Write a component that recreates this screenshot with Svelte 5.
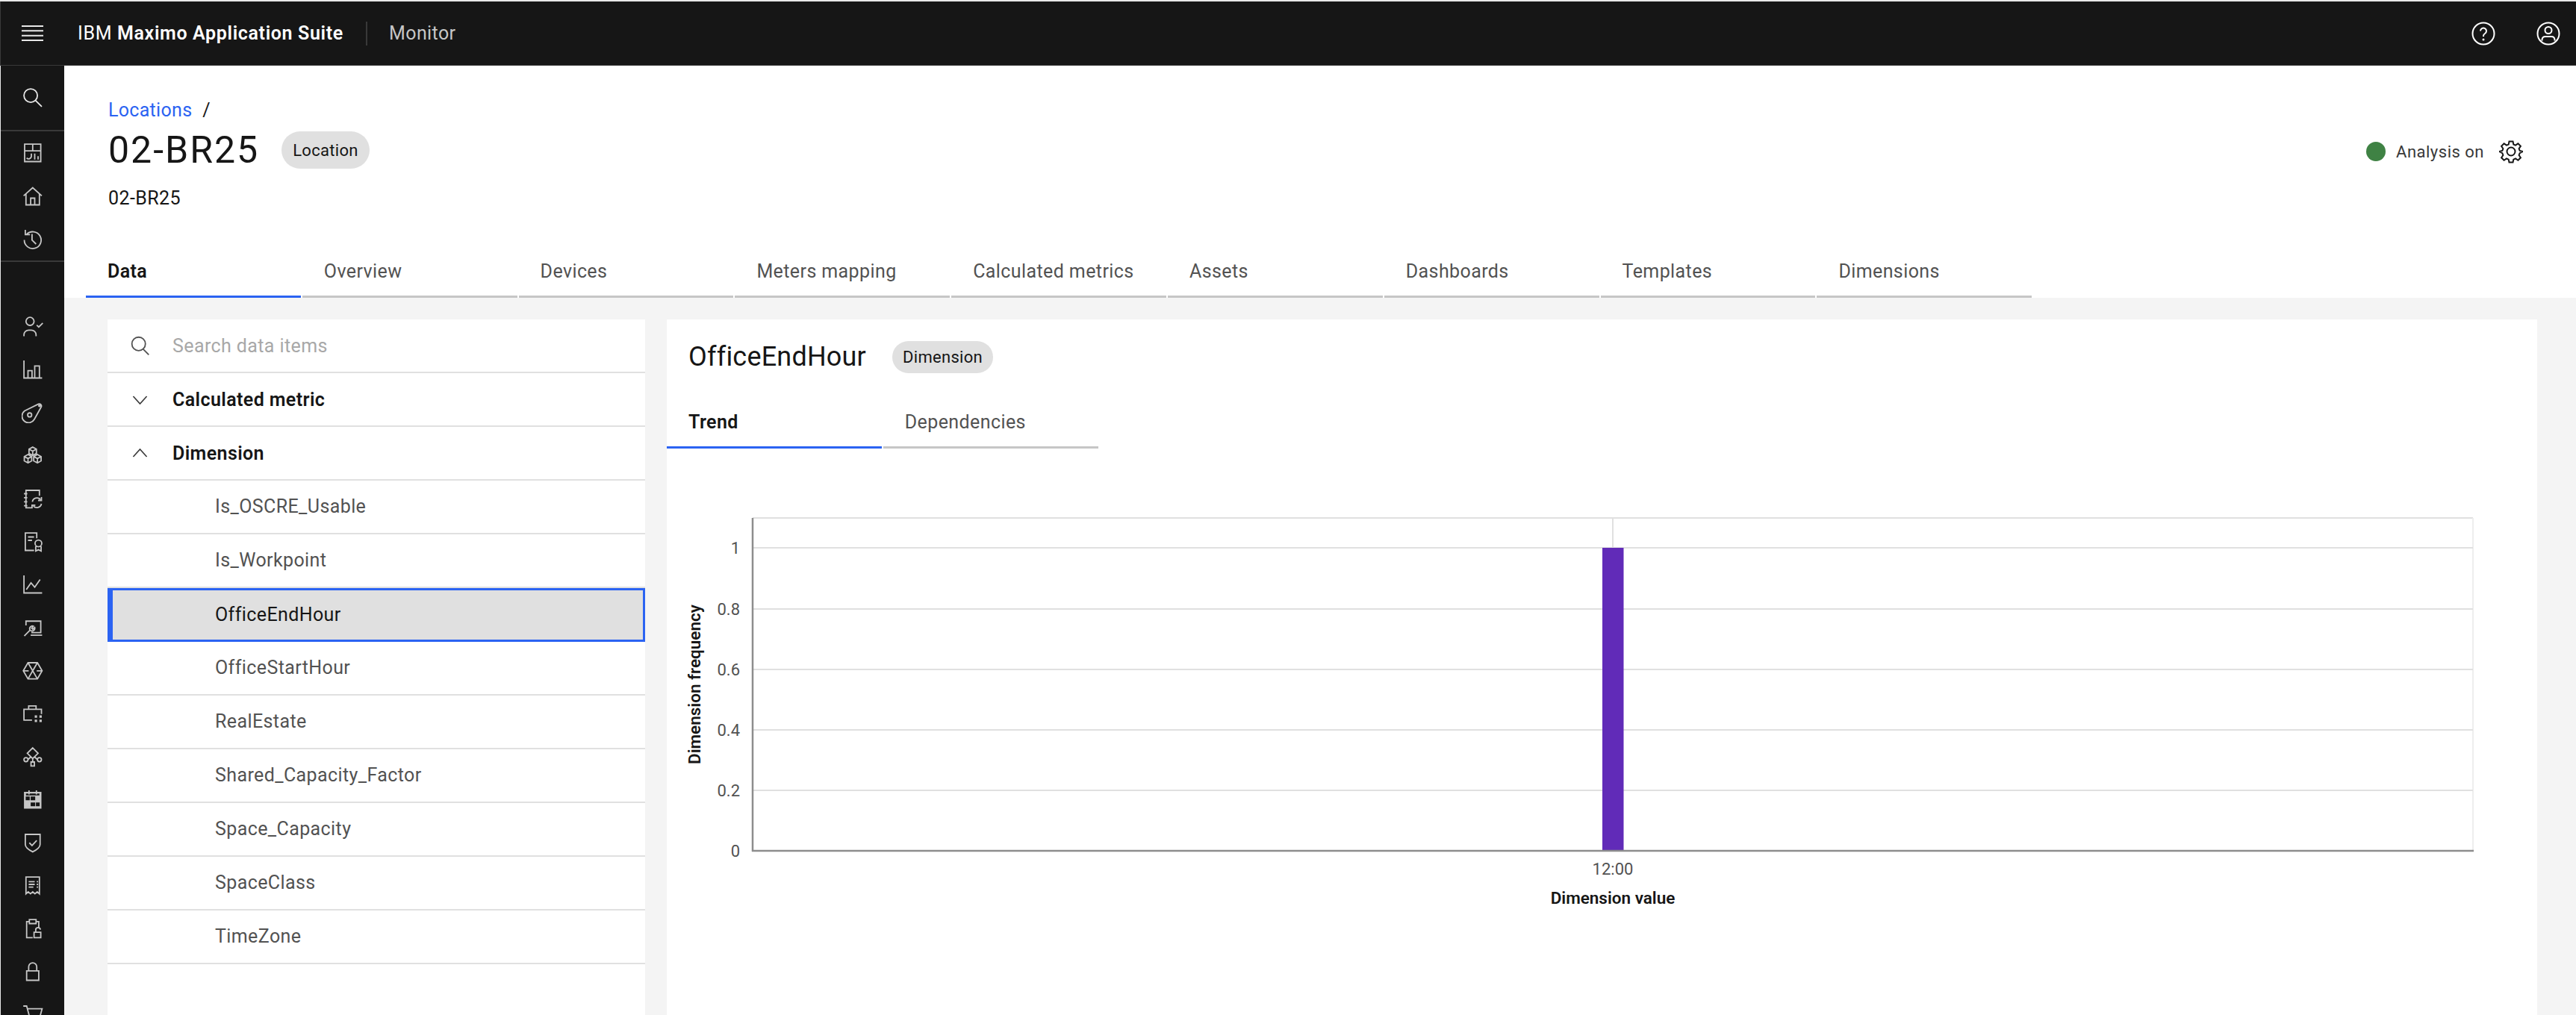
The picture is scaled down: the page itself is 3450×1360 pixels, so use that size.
<script>
  const circle = (cx, cy, r) => `M${cx - r} ${cy}a${r} ${r} 0 1 0 ${2 * r} 0a${r} ${r} 0 1 0 ${-2 * r} 0z`;
  const cube = (cx, cy) => `M${cx} ${cy - 6}l5.5 3v6.5l-5.5 3-5.5-3V${cy - 3}z M${cx - 5.5} ${cy - 3}l5.5 3 5.5-3 M${cx} ${cy}v6.5`;

  const topIcons = [
    { d: 'M4 3h24v26H4z M4 13h24 M16 3v10 M14 17v4a4 4 0 0 1-7 2.5 M19 17v9 M24 21v5' },
    { d: 'M2.5 15.5 16 3.5l13.5 12 M6 13v16h20V13 M13 29V19h6v10' },
    { d: 'M7 9.5A12.5 12.5 0 1 1 3.5 18 M5 3v7h7 M15 9v9l6 6' },
  ];
  const navIcons = [
    { d: `${circle(12, 8, 6)} M3 30v-2a7 7 0 0 1 7-7h4a7 7 0 0 1 7 7v2 M22 13.5l3 3 6-6` },
    { d: 'M3 3v26h27 M9 29V18h6v11 M19 29V11h7v18' },
    { d: `M4 13.5 24.5 3.3a3.2 3.2 0 0 1 4 4.6L18.5 26A9.8 9.8 0 1 1 4 13.5z ${circle(11.5, 19.5, 3)} ${circle(26, 6, 1)}` },
    { d: `${cube(16, 9)} ${cube(9, 20)} ${cube(23, 20)}` },
    { d: 'M26 12V4H6v26h8 M3 9h5 M3 15h5 M3 21h5 M3 27h5 M15.5 21a7 7 0 0 1 12-3.5 M29 14v5h-5 M29 24a7 7 0 0 1-12 3.5 M15 31v-5h5' },
    { d: `M22 11V3H5v26h13 M9 9h9 M9 14h6 ${circle(24.5, 18.5, 5)} M20.5 23v7l4-2 4 2v-7` },
    { d: 'M3 3v26h27 M6.5 24l7-10 5.5 6.5 8-11.5' },
    { d: 'M6 13V6.5h22v17H14 M13 27.5h17 M3.5 28.5l8.5-8.5 M12 20c-2-4 2-7.5 5-6l-2.5 3 1.5 1.5 3-2.5c1 3.500-3 7-7 4z' },
    { d: 'M9 4h14l7 12-7 12H9L2 16z M9 4l14 24 M23 4L9 28 M2 16h8 M22 16h8' },
    { d: 'M15 26H3V10h26v7 M10 10V5h11v5', fill: 'M19 19h3.500v3.500H19z M26 19h3.500v3.500H26z M19 25.500h3.500V29H19z M26 25.500h3.500V29H26z' },
    { d: `M16 3l8 8-8 8-8-8z ${circle(6, 20.500, 3)} ${circle(26, 20.500, 3)} M13.500 24h5v6h-5z M16 19v5 M9 20.500l4-4 M23 20.500l-4-4` },
    { d: 'M4 6h24v23H4z M10.500 3v6 M21.500 3v6', fill: 'M4 6h24v23H4z', dark: 'M6 7.500h20v3H6z M5.600 12h6v5.500h-6z M13 12h6.700v5.500H13z M13 21h6.700v5.500H13z M20.800 21h5.600v5.500h-5.600z' },
    { d: 'M5 4h22v15c0 4-5 8-11 11-6-3-11-7-11-11z M11 16.500l4 4 7-7.500' },
    { d: 'M6 3h20v25l-3.300-3-3.400 3-3.300-3-3.300 3-3.400-3L6 28z M10 10h9 M10 14h9 M10 18h7 M22 10h2 M22 14h2 M22 18h2' },
    { d: 'M11 6H7v24h9 M21 6h4v9 M11 3h10v6H11z M18 22h10v8H18z M20.500 22v-3a3.500 3.500 0 0 1 7-1' },
    { d: 'M7 15h18v14H7z M10 15V9a6 6 0 0 1 12 0v6' },
    { d: 'M2 4h5l4 15h16l3-11H8' },
  ];

  const tabs = ['Data', 'Overview', 'Devices', 'Meters mapping', 'Calculated metrics', 'Assets', 'Dashboards', 'Templates', 'Dimensions'];
  const items = ['Is_OSCRE_Usable', 'Is_Workpoint', 'OfficeEndHour', 'OfficeStartHour', 'RealEstate', 'Shared_Capacity_Factor', 'Space_Capacity', 'SpaceClass', 'TimeZone'];
  const ticks = [['1', 733], ['0.8', 815], ['0.6', 896], ['0.4', 977], ['0.2', 1058], ['0', 1139]];
  // chart svg starts at page y=640, panel x=893
  const oy = 640, ox = 893;
</script>

<div class="page">
  <header class="top">
    <svg class="burger" viewBox="0 0 29 21"><path d="M0 1h29M0 7.300h29M0 13.700h29M0 20h29" /></svg>
    <span class="brand">IBM <b>Maximo Application Suite</b></span>
    <span class="app">Monitor</span>
    <span class="top-sp"></span>
    <button class="round" aria-label="Help">
      <svg viewBox="0 0 32 32"><circle cx="16" cy="16" r="14.500" /><path d="M12 12.500a4 4 0 1 1 6 3.500c-1.300.800-2 1.500-2 3v1" /><circle class="dot" cx="16" cy="24" r="1.500" /></svg>
    </button>
    <button class="round" aria-label="User">
      <svg viewBox="0 0 32 32"><circle cx="16" cy="16" r="14.500" /><circle cx="16" cy="11.500" r="4.500" /><path d="M7.500 25.500V24a4.500 4.500 0 0 1 4.500-4h8a4.500 4.500 0 0 1 4.500 4v1.500" /></svg>
    </button>
  </header>

  <div class="shell">
    <nav class="side">
      <div class="side-group first">
        <svg class="ico bright" viewBox="0 0 32 32"><path d="M3 13a10 10 0 1 0 20 0a10 10 0 1 0-20 0z M20.500 20.500 29.500 29.500" /></svg>
      </div>
      <div class="side-group">
        {#each topIcons as ic}
          <svg class="ico" viewBox="0 0 32 32"><path d={ic.d} /></svg>
        {/each}
      </div>
      <div class="side-group last">
        {#each navIcons as ic}
          <svg class="ico" viewBox="0 0 32 32">
            {#if ic.fill}<path class="solid" d={ic.fill} />{/if}
            {#if ic.dark}<path class="hole" d={ic.dark} />{/if}
            <path d={ic.d} />
          </svg>
        {/each}
      </div>
    </nav>

    <main class="main">
      <section class="head">
        <div class="head-row">
          <div>
            <div class="crumb"><a href="#loc">Locations</a><span>/</span></div>
            <div class="title-row"><h1>02-BR25</h1><span class="chip">Location</span></div>
            <div class="sub">02-BR25</div>
          </div>
          <div class="status">
            <span class="status-dot"></span>
            <span class="status-t">Analysis on</span>
            <svg class="gear" viewBox="0 0 32 32"><path d="M13.500 2.500h5l.8 4 2.700 1.100 3.400-2.300 3.500 3.500-2.300 3.400L27.700 15l3.800.8v.4l-3.800 2-1.100 2.700 2.300 3.400-3.500 3.500-3.400-2.300-2.700 1.100-.800 3.900h-5l-.8-3.900-2.700-1.100-3.400 2.300-3.500-3.500 2.300-3.400-1.100-2.700-3.800-2v-.4l3.800-.8 1.100-2.700-2.300-3.400 3.500-3.500 3.400 2.300 2.700-1.100z" /><circle cx="16" cy="16" r="5.500" /></svg>
          </div>
        </div>
        <div class="tabs">
          {#each tabs as t, i}
            <div class="tab" class:on={i === 0}>{t}</div>
          {/each}
        </div>
      </section>

      <section class="body">
        <aside class="list">
          <div class="row search">
            <svg class="ri" viewBox="0 0 32 32"><path d="M4 13a10 10 0 1 0 20 0a10 10 0 1 0-20 0z M20.500 20.500 29 29" /></svg>
            <span>Search data items</span>
          </div>
          <div class="row group">
            <svg class="rc" viewBox="0 0 32 32"><path d="M6 11l10 11 10-11" /></svg>
            <span>Calculated metric</span>
          </div>
          <div class="row group">
            <svg class="rc" viewBox="0 0 32 32"><path d="M6 21l10-11 10 11" /></svg>
            <span>Dimension</span>
          </div>
          {#each items as it}
            <div class="row item" class:sel={it === 'OfficeEndHour'}>{it}</div>
          {/each}
        </aside>

        <article class="detail">
          <div class="d-title"><h2>OfficeEndHour</h2><span class="chip small">Dimension</span></div>
          <div class="d-tabs">
            <div class="tab on">Trend</div>
            <div class="tab">Dependencies</div>
          </div>
          <svg class="chart" width="2504" height="600" viewBox="0 0 2504 600">
            <line class="grid" x1={1008 - ox} x2={3312 - ox} y1={693 - oy} y2={693 - oy} />
            <line class="grid" x1={2160 - ox} x2={2160 - ox} y1={693 - oy} y2={733 - oy} />
            <line class="grid faint" x1={3312 - ox} x2={3312 - ox} y1={693 - oy} y2={1139 - oy} />
            {#each ticks as [label, y]}
              {#if label !== '0'}<line class="grid" x1={1008 - ox} x2={3312 - ox} y1={y - oy} y2={y - oy} />{/if}
              <text class="tick" x={991 - ox} y={y - oy + 8} text-anchor="end">{label}</text>
            {/each}
            <rect class="bar" x={2146 - ox} y={733 - oy} width="28.500" height="406" />
            <line class="axis" x1={1008 - ox} x2={1008 - ox} y1={693 - oy} y2={1140 - oy} />
            <line class="axis" x1={1007 - ox} x2={3313 - ox} y1={1139 - oy} y2={1139 - oy} />
            <text class="tick" x={2160 - ox} y={1171 - oy} text-anchor="middle">12:00</text>
            <text class="alabel" x={2160 - ox} y={1210 - oy} text-anchor="middle">Dimension value</text>
            <text class="alabel" transform="translate({938 - ox} {916 - oy}) rotate(-90)" text-anchor="middle">Dimension frequency</text>
          </svg>
        </article>
      </section>
    </main>
  </div>
</div>

<style>
  :global(body) { margin: 0; background: #fff; }
  .page { width: 3450px; height: 1360px; overflow: hidden; font-family: Roboto, "Noto Sans", sans-serif; font-size: 25px; color: #161616; background: #e8e8e8; padding-top: 2px; box-sizing: border-box; }
  .top { height: 85px; background: #161616; border-left: 1px solid #3a3a3a; border-bottom: 1px solid #393939; display: flex; align-items: center; color: #fff; }
  .burger { width: 29px; height: 21px; margin-left: 28px; fill: none; stroke: #e8e8e8; stroke-width: 2; }
  .brand { margin-left: 46px; width: 388px; letter-spacing: 0.65px; border-right: 2px solid #393939; line-height: 32px; box-sizing: border-box; }
  .brand b { font-weight: 600; }
  .app { margin-left: 29px; color: #c6c6c6; letter-spacing: 0.4px; }
  .top-sp { flex: 1; }
  .round { width: 32px; height: 32px; padding: 0; background: none; border: 0; margin-right: 21px; margin-left: 34px; }
  .round svg { display: block; width: 32px; height: 32px; fill: none; stroke: #fff; stroke-width: 2; }
  .round .dot { fill: #fff; stroke: none; }
  .shell { display: flex; height: 1273px; }
  .side { width: 85px; margin-left: 1px; flex: 0 0 auto; background: #161616; display: flex; flex-direction: column; overflow: hidden; }
  .side-group { flex: 0 0 auto; display: flex; flex-direction: column; align-items: center; border-bottom: 2px solid #393939; }
  .side-group.first { height: 88px; box-sizing: border-box; justify-content: center; }
  .side-group.last { border-bottom: 0; padding-top: 58px; }
  .ico { flex: 0 0 auto; width: 57.600px; height: 57.600px; padding: 14.400px; box-sizing: border-box; fill: none; stroke: #c6c6c6; stroke-width: 2; }
  .ico.bright { stroke: #e8e8e8; }
  .ico .solid { fill: #c6c6c6; stroke: none; }
  .ico .hole { fill: #161616; stroke: none; }
  .main { flex: 1; min-width: 0; display: flex; flex-direction: column; background: #f4f4f4; }
  .head { background: #fff; height: 311px; padding: 45px 0 0 29px; box-sizing: border-box; display: flex; flex-direction: column; }
  .head-row { flex: 1; display: flex; justify-content: space-between; padding-left: 30px; }
  .crumb { display: flex; gap: 14px; line-height: 30px; color: #161616; }
  .crumb a { color: #2b63f2; text-decoration: none; letter-spacing: 0.3px; }
  .title-row { display: flex; align-items: center; gap: 30px; margin-top: 13px; }
  h1 { margin: 0; font-size: 50px; font-weight: 400; line-height: 50px; letter-spacing: 2px; }
  .chip { display: inline-flex; align-items: center; height: 50px; padding: 0 15px; border-radius: 25px; background: #e0e0e0; font-size: 22px; letter-spacing: 0.3px; }
  .chip.small { height: 43px; border-radius: 22px; padding: 0 14px; }
  .sub { margin-top: 25px; line-height: 30px; letter-spacing: 0.4px; }
  .status { display: flex; align-items: center; height: 32px; margin-top: 54px; margin-right: 71px; }
  .status-dot { width: 26px; height: 26px; border-radius: 50%; background: #3f8244; margin-right: 14px; }
  .status-t { font-size: 22px; color: #393939; letter-spacing: 0.5px; }
  .gear { width: 32px; height: 32px; margin-left: 20px; fill: none; stroke: #161616; stroke-width: 2; }
  .tabs, .d-tabs { display: flex; gap: 2px; }
  .tab { width: 287.800px; height: 66px; padding: 0 0 3px 29px; box-sizing: border-box; display: flex; align-items: center; border-bottom: 3px solid #c6c6c6; color: #525252; letter-spacing: 0.4px; }
  .tab.on { border-bottom-color: #2b63f2; color: #161616; font-weight: 600; }
  .body { flex: 1; min-height: 0; display: flex; gap: 29px; padding: 29px 52px 0 58px; }
  .list { width: 720px; background: #fff; flex: 0 0 auto; }
  .row { height: 72px; display: flex; align-items: center; box-sizing: border-box; border-bottom: 2px solid #e0e0e0; letter-spacing: 0.4px; }
  .search { color: #a8a8a8; }
  .ri { width: 29px; height: 29px; margin: 0 29px 0 29px; fill: none; stroke: #525252; stroke-width: 2; }
  .rc { width: 29px; height: 29px; margin: 0 29px 0 29px; fill: none; stroke: #393939; stroke-width: 1.800; }
  .group { font-weight: 600; }
  .item { padding-left: 144px; color: #525252; padding-bottom: 2px; }
  .item.sel { background: #e0e0e0; color: #161616; border: 3px solid #2b63f2; border-left-width: 7px; padding-left: 137px; }
  .detail { flex: 1; min-width: 0; background: #fff; }
  .d-title { display: flex; align-items: center; height: 107px; padding: 0 0 7px 29px; gap: 35px; box-sizing: border-box; }
  h2 { margin: 0; font-size: 36px; font-weight: 400; letter-spacing: 0.2px; }
  .chart { display: block; margin-top: 40px; }
  .grid { stroke: #e0e0e0; stroke-width: 2; }
  .grid.faint { stroke: #eeeeee; }
  .axis { stroke: #8d8d8d; stroke-width: 2.500; }
  .bar { fill: #612bb8; }
  .tick { font-size: 22px; fill: #525252; }
  .alabel { font-size: 22.500px; font-weight: 600; fill: #161616; }
</style>
